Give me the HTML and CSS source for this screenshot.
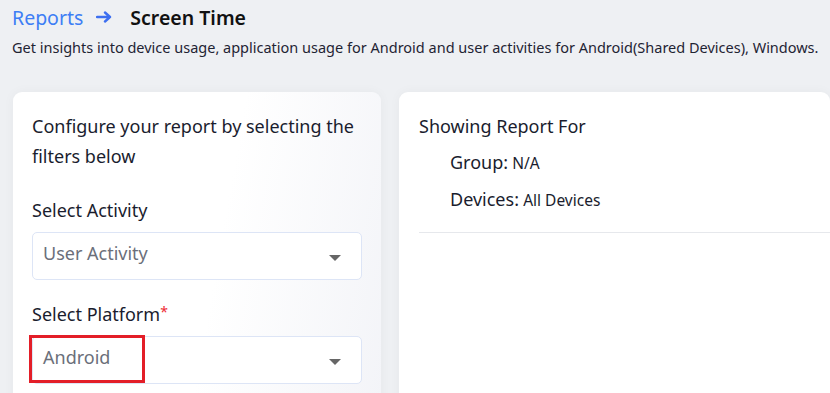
FILE: index.html
```html
<!DOCTYPE html>
<html>
<head>
<meta charset="utf-8">
<link rel="stylesheet" href="styles.css">
</head>
<body>
<div class="page">
  <div class="crumbs">
    <span class="crumb-link">Reports</span>
    <svg class="crumb-arrow" width="16" height="12" viewBox="0 0 16 12"><path d="M1 6H14M9 1.5L14 6L9 10.5" fill="none" stroke="#3d6ff0" stroke-width="2.4" stroke-linecap="round" stroke-linejoin="round"/></svg>
    <span class="crumb-current">Screen Time</span>
  </div>
  <p class="desc">Get insights into device usage, application usage for Android and user activities for Android(Shared Devices), Windows.</p>
  <div class="cards">
    <div class="card card-left">
      <p class="intro">Configure your report by selecting the filters below</p>
      <label class="field-label">Select Activity</label>
      <div class="select">
        <span class="select-value">User Activity</span>
        <span class="caret"></span>
      </div>
      <label class="field-label">Select Platform<span class="req">*</span></label>
      <div class="select">
        <span class="select-value">Android</span>
        <span class="caret"></span>
        <span class="highlight"></span>
      </div>
    </div>
    <div class="card card-right">
      <p class="showing">Showing Report For</p>
      <div class="info-row"><span class="info-key">Group:</span> <span class="info-val">N/A</span></div>
      <div class="info-row"><span class="info-key">Devices:</span> <span class="info-val">All Devices</span></div>
      <div class="divider"></div>
    </div>
  </div>
</div>
</body>
</html>
```

FILE: styles.css
```css
html, body {
  margin: 0;
  padding: 0;
  overflow: hidden;
}
body {
  width: 830px;
  height: 393px;
  background: #eef0f3;
  font-family: "Noto Sans", "Open Sans", sans-serif;
  color: #1a1d2e;
}
.page {
  padding: 3px 0 0 12px;
}
.crumbs {
  display: flex;
  align-items: center;
  height: 28px;
  font-size: 19.5px;
}
.crumb-link {
  color: #3d7ef5;
}
.crumb-arrow {
  margin: 0 18px 0 13px;
}
.crumb-current {
  font-weight: 600;
  color: #111;
}
.desc {
  margin: 6px 0 0;
  font-size: 14.5px;
  color: #1f2433;
}
.cards {
  display: flex;
  gap: 18px;
  margin-top: 35px;
  margin-left: 1px;
}
.card {
  background: #fff;
  border-radius: 9px;
  box-shadow: 0 0 12px rgba(0, 0, 0, 0.04);
  height: 320px;
}
.card-left {
  width: 368px;
  padding: 19px 19px 0 19px;
  box-sizing: border-box;
  background: linear-gradient(100deg, #ffffff 55%, #f3f4f8 100%);
}
.card-right {
  flex: 1;
  padding: 19px 0 0 20px;
}
.intro {
  margin: 0;
  font-size: 18px;
  line-height: 30px;
  color: #1a1d2e;
}
.field-label {
  display: block;
  font-size: 18px;
  line-height: 24px;
  margin-top: 27px;
  color: #1a1d2e;
}
.req {
  color: #ee2b35;
  font-size: 14px;
  line-height: 14px;
  vertical-align: 4px;
}
.select {
  position: relative;
  margin-top: 10px;
  height: 46px;
  border: 1px solid #dde5f6;
  border-radius: 5px;
  background: #fff;
  display: flex;
  align-items: center;
  justify-content: space-between;
  padding: 0 20px 0 10px;
}
.select + .field-label {
  margin-top: 22px;
}
.select-value {
  font-size: 18px;
  color: #6b6f7a;
  margin-top: -6px;
}
.caret {
  width: 0;
  height: 0;
  border-left: 6px solid transparent;
  border-right: 6px solid transparent;
  border-top: 6px solid #666;
  margin-top: 4px;
}
.highlight {
  position: absolute;
  left: -4px;
  top: -2px;
  width: 110px;
  height: 42px;
  border: 3px solid #e31e28;
}
.showing {
  margin: 0;
  font-size: 18px;
  line-height: 30px;
  color: #1a1d2e;
}
.info-row {
  margin-left: 31px;
  margin-top: 6px;
  line-height: 30px;
}
.info-key {
  font-size: 18px;
}
.info-val {
  font-size: 15.5px;
}
.divider {
  margin-top: 17px;
  height: 1px;
  background: #e6e8ec;
}
```
